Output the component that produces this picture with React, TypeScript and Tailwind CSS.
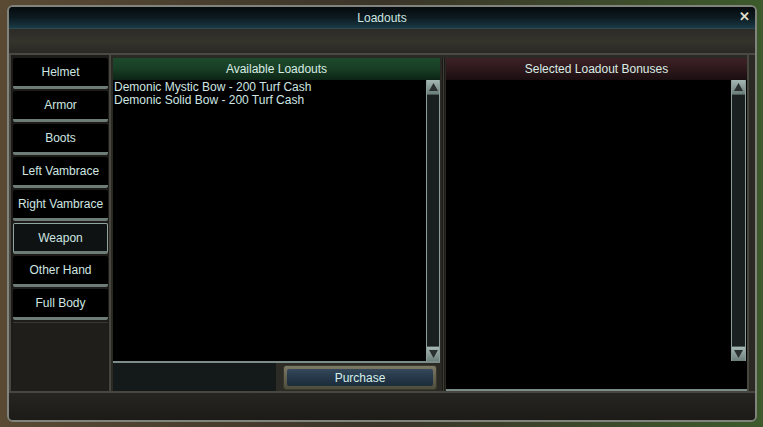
import React from 'react';

const slots = ['Helmet', 'Armor', 'Boots', 'Left Vambrace', 'Right Vambrace', 'Weapon', 'Other Hand', 'Full Body'];

const loadouts = ['Demonic Mystic Bow - 200 Turf Cash', 'Demonic Solid Bow - 200 Turf Cash'];

const ScrollBar: React.FC<{ w: string }> = ({ w }) => (
  <div className={`${w} h-[281px] flex flex-col bg-[#1a201f] border-x border-[#8c9e9a]`}>
    <div className="h-[15px] bg-gradient-to-b from-[#a6b8b4] to-[#6c7e7a] flex items-center justify-center border-b border-[#4c5a58]">
      <svg width="9" height="8" viewBox="0 0 9 8">
        <path d="M4.5 0 L9 8 L0 8 Z" fill="#2a302e" />
      </svg>
    </div>
    <div className="flex-1" />
    <div className="h-[15px] bg-gradient-to-b from-[#a6b8b4] to-[#6c7e7a] flex items-center justify-center border-t border-[#4c5a58]">
      <svg width="9" height="8" viewBox="0 0 9 8">
        <path d="M0 0 L9 0 L4.5 8 Z" fill="#2a302e" />
      </svg>
    </div>
  </div>
);

export default function App() {
  return (
    <div
      className="w-[763px] h-[427px] overflow-hidden bg-gradient-to-r from-[#5a4a34] via-[#3a3428] to-[#3c5a2c] pt-[5px] pl-[7px]"
      style={{ fontFamily: '"Liberation Sans", Arial, sans-serif' }}
    >
      <div className="w-[750px] h-[417px] border-2 border-[#80847c] rounded-[6px] bg-[#22211d] flex flex-col overflow-hidden">
        {/* Title bar */}
        <div className="h-[22px] relative flex items-center justify-center bg-gradient-to-b from-[#060b0e] via-[#0c1a20] to-[#1a3a46] border-b border-[#2e4a50]">
          <span className="text-[12px] text-[#cfe6e2]">Loadouts</span>
          <span className="absolute right-[5px] top-[3px] text-[13px] font-bold text-[#dedccc] leading-none">✕</span>
        </div>

        {/* Texture strip */}
        <div className="h-[26px] bg-gradient-to-b from-[#2c2b26] via-[#34332c] to-[#2a2924] border-b-2 border-[#4a4a42]" />

        {/* Content */}
        <div className="h-[336px] flex bg-[#2a2924]">
          {/* Left slot list */}
          <div className="w-[102px] h-full flex flex-col pl-[2px] pr-[1px] pt-[1px] border-x-2 border-[#48473f] bg-[#1d1c19]">
            {slots.map((s) => {
              const sel = s === 'Weapon';
              return (
                <div
                  key={s}
                  className={`mt-[2px] w-[95px] h-[31px] flex items-center justify-center text-[12px] text-[#cfe6e2] border-b-[3px] border-b-[#6e7c78] rounded-[2px] ${
                    sel ? 'bg-[#0e1212] border-x border-t border-[#8fa4a0]' : 'bg-black'
                  }`}
                >
                  {s}
                </div>
              );
            })}
            <div className="flex-1 mt-[2px] bg-[#1f1e1b] border-t border-[#3a3832]" />
          </div>

          {/* Available loadouts */}
          <div className="w-[327px] h-full flex flex-col pt-[3px] ml-[2px]">
            <div className="h-[22px] flex items-center justify-center bg-gradient-to-b from-[#1d4a2c] via-[#183e25] to-[#0c2414] text-[12px] text-[#d8ece4]">
              Available Loadouts
            </div>
            <div className="h-[281px] flex bg-black">
              <div className="flex-1 pl-[1px] pt-[1px] text-[12px] leading-[13px] text-[#cfe6e2]">
                {loadouts.map((l) => (
                  <div key={l}>{l}</div>
                ))}
              </div>
              <ScrollBar w="w-[14px]" />
            </div>
            <div className="h-[2px] bg-[#7c8c88]" />
            <div className="flex-1 flex">
              <div className="w-[163px] bg-[#141a1a]" />
              <div className="w-[7px] bg-[#2c2b26]" />
              <div className="w-[154px] h-[25px] mt-[2px] p-[3px] rounded-[3px] bg-gradient-to-b from-[#7c7a64] to-[#4e4c3c] border border-[#3a382c]">
                <div className="h-full rounded-[2px] bg-gradient-to-b from-[#34495a] via-[#26384a] to-[#1c2c3a] flex items-center justify-center text-[12px] text-[#d6f0ec]">
                  Purchase
                </div>
              </div>
            </div>
          </div>

          {/* Separator */}
          <div className="w-[6px] h-full flex justify-center pt-[3px]">
            <div className="w-[3px] h-full bg-[#3e3d36] border-x border-[#1a1a16]" />
          </div>

          {/* Selected bonuses */}
          <div className="w-[301px] h-full flex flex-col pt-[3px]">
            <div className="h-[22px] flex items-center justify-center bg-gradient-to-b from-[#3c2226] via-[#2e181c] to-[#1a0e10] text-[12px] text-[#d8ece4]">
              Selected Loadout Bonuses
            </div>
            <div className="h-[309px] flex bg-black">
              <div className="flex-1" />
              <ScrollBar w="w-[15px]" />
              <div className="w-[1px]" />
            </div>
            <div className="h-[2px] bg-[#7c8c88]" />
          </div>
          <div className="flex-1 border-l-2 border-[#48473f]" />
        </div>

        {/* Bottom strip */}
        <div className="flex-1 bg-gradient-to-b from-[#262521] to-[#1c1b18] border-t-2 border-[#48473f]" />
      </div>
    </div>
  );
}
